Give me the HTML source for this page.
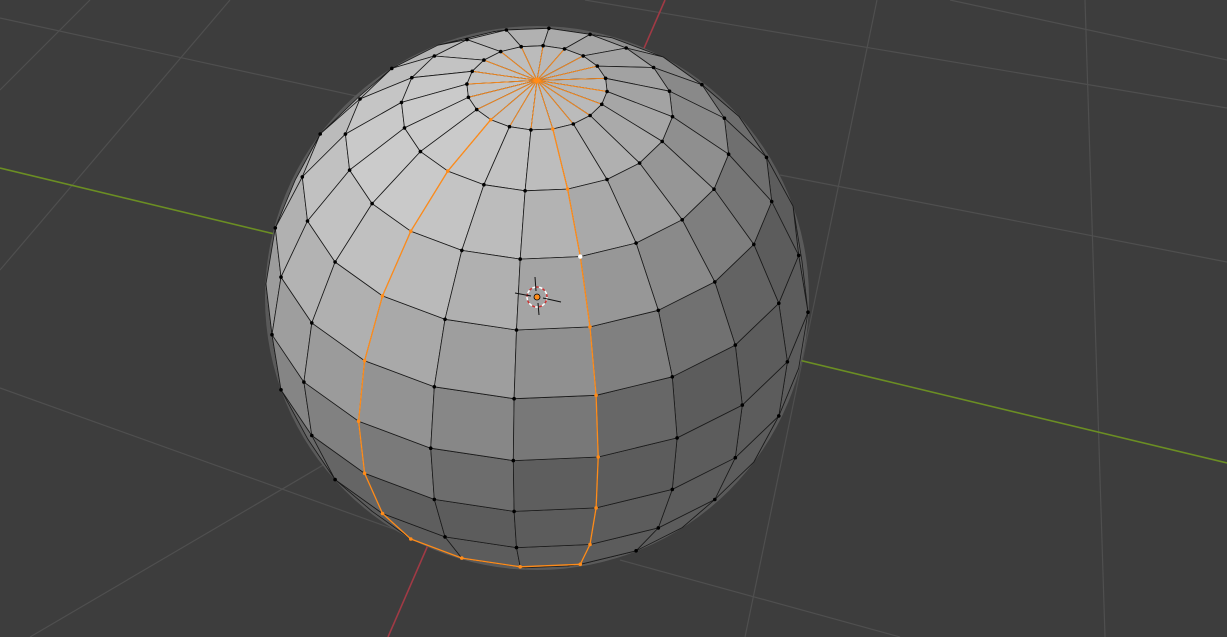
<!DOCTYPE html>
<html><head><meta charset="utf-8"><style>
html,body{margin:0;padding:0;background:#3d3d3d;width:1227px;height:637px;overflow:hidden}
svg{display:block}
</style></head><body>
<svg id="s" width="1227" height="637" viewBox="0 0 1227 637" xmlns="http://www.w3.org/2000/svg">
<rect width="1227" height="637" fill="#3d3d3d"/>
<g stroke="#4f4f4f" stroke-width="1.2" fill="none">
<line x1="585" y1="0" x2="1227" y2="108"/>
<line x1="0" y1="18" x2="420" y2="110"/>
<line x1="780" y1="175" x2="1227" y2="262"/>
<line x1="0" y1="388" x2="480" y2="560"/>
<line x1="620" y1="560" x2="900" y2="637"/>
<line x1="1085" y1="0" x2="1105" y2="637"/>
<line x1="877" y1="0" x2="745" y2="637"/>
<line x1="230" y1="0" x2="0" y2="270"/>
<line x1="90" y1="0" x2="0" y2="90"/>
<line x1="400" y1="420" x2="30" y2="637"/>
<line x1="950" y1="0" x2="1227" y2="60"/>
</g>
<line x1="0" y1="168" x2="1227" y2="463" stroke="#6b8e23" stroke-width="1.6"/>
<line x1="665" y1="0" x2="388" y2="637" stroke="#a03a45" stroke-width="1.6"/>
<g id="sph"></g>
</svg>
<script>
(function(){
var cx=537,cy=298,R=272,ca=0.8,sa=0.6,NS=20,NR=12,off=-5*Math.PI/180;
function lam(k){return -Math.PI/2+off+2*Math.PI*k/NS;}
function P(i,k){var ph=Math.PI*i/NR,la=lam(k);
var x=Math.sin(ph)*Math.cos(la),y=Math.sin(ph)*Math.sin(la),z=Math.cos(ph);
var up=z*ca+y*sa,d=z*sa-y*ca;return {X:cx+R*x,Y:cy-R*up,d:d};}
var L=[-0.45,0.6,0.66],ln=Math.hypot(L[0],L[1],L[2]);L=L.map(function(v){return v/ln});
var out=[];
out.push('<circle cx="'+cx+'" cy="'+cy+'" r="'+R+'" fill="#5a5a5a"/>');
var faces=[];
for(var i=0;i<NR;i++)for(var k=0;k<NS;k++){
var a=P(i,k),b=P(i,k+1),c=P(i+1,k+1),e=P(i+1,k);
var ph=Math.PI*(i+.5)/NR,la=lam(k+.5);
var x=Math.sin(ph)*Math.cos(la),y=Math.sin(ph)*Math.sin(la),z=Math.cos(ph);
var n=[x,z*ca+y*sa,z*sa-y*ca];if(n[2]<-0.1)continue;
var l=Math.max(0,n[0]*L[0]+n[1]*L[1]+n[2]*L[2]);var g=Math.round(92+112*l);
faces.push({d:n[2],s:'<polygon points="'+[a,b,c,e].map(function(p){return p.X.toFixed(1)+','+p.Y.toFixed(1)}).join(' ')+'" fill="rgb('+g+','+g+','+g+')" stroke="#1a1a1a" stroke-width="0.8" stroke-linejoin="round"/>'});}
faces.sort(function(p,q){return p.d-q.d});faces.forEach(function(f){out.push(f.s)});
var OR='#ff8c1a',kL=-2,kR=1,ring=9,os='';
function seg(p,q,w){if(p.d<0&&q.d<0)return '';return '<line x1="'+p.X.toFixed(1)+'" y1="'+p.Y.toFixed(1)+'" x2="'+q.X.toFixed(1)+'" y2="'+q.Y.toFixed(1)+'" stroke="'+OR+'" stroke-width="'+(w||1.3)+'"/>';}
for(var k=0;k<NS;k++){if(P(1,k).d>0)os+=seg(P(0,0),P(1,k),0.9);}
for(var i=1;i<ring;i++){os+=seg(P(i,kL),P(i+1,kL));os+=seg(P(i,kR),P(i+1,kR));}
for(var k=kL;k<kR;k++){os+=seg(P(ring,k),P(ring,k+1));}
out.push(os);
for(var i=1;i<NR;i++)for(var k=0;k<NS;k++){var p=P(i,k);if(p.d<0)continue;
var kk=(k>NS/2)?k-NS:k;
var sel=((kk==kL||kk==kR)&&i<=ring)||(i==ring&&kk>=kL&&kk<=kR);
out.push('<circle cx="'+p.X.toFixed(1)+'" cy="'+p.Y.toFixed(1)+'" r="1.8" fill="'+(sel?OR:'#000')+'"/>');}
var p0=P(0,0);out.push('<circle cx="'+p0.X+'" cy="'+p0.Y+'" r="3" fill="'+OR+'"/>');
var pw=P(3,kR);out.push('<circle cx="'+pw.X+'" cy="'+pw.Y+'" r="2.2" fill="#fff"/>');
out.push('<g transform="translate(537,297)"><circle r="10" fill="none" stroke="#fff" stroke-width="1.5" stroke-dasharray="4 3"/><circle r="10" fill="none" stroke="#c33" stroke-width="1.5" stroke-dasharray="3 4" stroke-dashoffset="3.5"/><line x1="-22" y1="-4" x2="-6" y2="-1" stroke="#111" stroke-width="1"/><line x1="6" y1="1" x2="24" y2="5" stroke="#111" stroke-width="1"/><line x1="-2" y1="-20" x2="-1" y2="-6" stroke="#111"/><line x1="1" y1="6" x2="2" y2="18" stroke="#111"/><circle r="3" fill="'+OR+'" stroke="#000" stroke-width="0.8"/></g>');
document.getElementById('sph').innerHTML=out.join('');
})();
</script>
</body></html>
